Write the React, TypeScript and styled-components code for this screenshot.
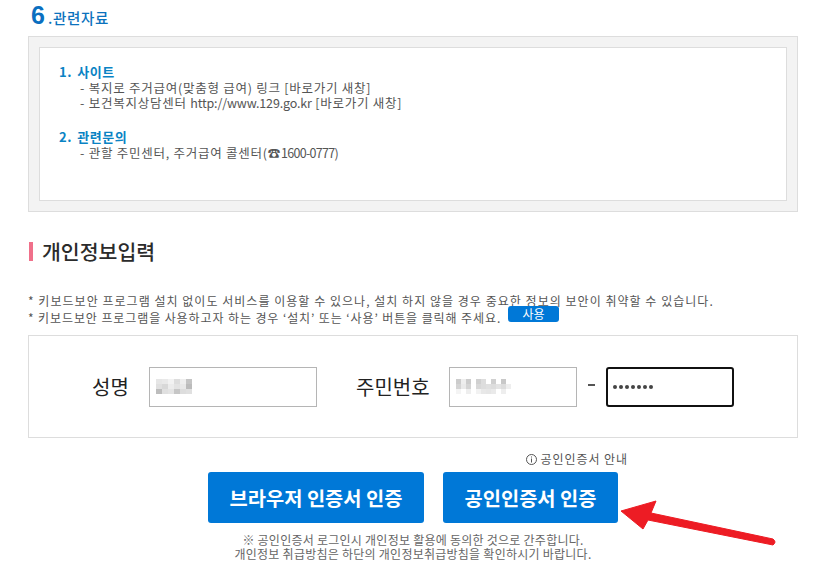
import React from "react";
import styled, { createGlobalStyle } from "styled-components";

const GlobalStyle = createGlobalStyle`
  html, body {
    margin: 0;
    padding: 0;
    background: #fff;
    font-family: "Noto Sans CJK KR", "Noto Sans", sans-serif;
    color: #555;
  }
`;

const Page = styled.div`
  position: relative;
  width: 770px;
  height: 582px;
  margin-left: 28px;
  overflow: hidden;
`;

const DocTitle = styled.h3`
  display: flex;
  align-items: baseline;
  height: 36px;
  margin: 0;
  padding: 3px 0 0 3px;
  box-sizing: border-box;
  font-size: 14.5px;
  line-height: 24px;
  font-weight: 500;
  letter-spacing: 0.7px;
  color: #0b72bd;
`;

const DocNumber = styled.span`
  font-family: "Liberation Sans", sans-serif;
  font-size: 25px;
  font-weight: 700;
  letter-spacing: 0;
  color: #0a6fc0;
  margin-right: 3px;
`;

const OuterBox = styled.div`
  height: 176px;
  box-sizing: border-box;
  padding: 10px;
  background: #f3f3f3;
  border: 1px solid #ddd;
`;

const InnerBox = styled.div`
  height: 100%;
  box-sizing: border-box;
  padding: 15px 19px;
  background: #fff;
  border: 1px solid #ddd;
  font-size: 12.5px;
  line-height: 15px;
  letter-spacing: 0.75px;
  color: #555;
`;

const ListTitle = styled.div<{ $gap?: number }>`
  margin-top: ${(p) => p.$gap ?? 0}px;
  font-size: 13px;
  font-weight: 700;
  line-height: 17px;
  letter-spacing: 0.5px;
  color: #0a83c4;
  word-spacing: 2px;
`;

const ListItem = styled.div`
  padding-left: 21px;
`;

const Latin = styled.span<{ $spacing: number }>`
  letter-spacing: ${(p) => p.$spacing}px;
`;

const SectionTitle = styled.h2`
  display: flex;
  align-items: center;
  gap: 9px;
  height: 24px;
  margin: 27px 0 0;
  font-size: 20.5px;
  line-height: 24px;
  font-weight: 500;
  color: #2b2b2b;
`;

const PinkBar = styled.i`
  display: block;
  width: 4px;
  height: 19px;
  margin: 1px 0 0 1px;
  background: #f0708a;
`;

const Notes = styled.div`
  margin-top: 29px;
  font-size: 12px;
  line-height: 17px;
  color: #555;
`;

const NoteLine = styled.div<{ $spacing: number }>`
  display: flex;
  align-items: flex-start;
  white-space: nowrap;
  letter-spacing: ${(p) => p.$spacing}px;
`;

const UseButton = styled.span`
  display: block;
  width: 51px;
  height: 16px;
  margin: -3px 0 0 7px;
  background: #0078d7;
  border-radius: 3px;
  color: #fff;
  font-size: 12px;
  line-height: 16px;
  letter-spacing: 0;
  text-align: center;
`;

const FormCard = styled.div`
  display: flex;
  align-items: center;
  height: 103px;
  box-sizing: border-box;
  margin-top: 9px;
  padding-left: 63px;
  border: 1px solid #ddd;
`;

const Label = styled.label<{ $width: number; $gap: number; $after: number }>`
  width: ${(p) => p.$width}px;
  margin-right: ${(p) => p.$after}px;
  margin-left: ${(p) => p.$gap}px;
  font-size: 20px;
  font-weight: 400;
  color: #222;
  white-space: nowrap;
`;

const FieldBox = styled.div<{ $width: number; $focus?: boolean }>`
  display: flex;
  align-items: center;
  width: ${(p) => p.$width}px;
  height: 40px;
  box-sizing: border-box;
  padding-left: ${(p) => (p.$focus ? 5 : 6)}px;
  background: #fff;
  border: ${(p) => (p.$focus ? "2px solid #111" : "1px solid #b5b5b5")};
  border-radius: ${(p) => (p.$focus ? "3px" : "0")};
`;

const Dash = styled.span`
  width: 7px;
  height: 2px;
  margin: 0 11px 4px;
  background: #555;
`;

const Dots = styled.span`
  display: flex;
  gap: 2px;
`;

const Dot = styled.i`
  width: 4px;
  height: 4px;
  border-radius: 50%;
  background: #444;
`;

const InfoRow = styled.div`
  display: flex;
  justify-content: flex-end;
  align-items: center;
  gap: 2px;
  height: 14px;
  margin-top: 14px;
  padding-right: 170px;
  font-size: 12px;
  line-height: 14px;
  letter-spacing: 0.95px;
  color: #555;
`;

const Buttons = styled.div`
  display: flex;
  justify-content: center;
  gap: 19px;
  margin-top: 6px;
`;

const AuthButton = styled.button<{ $width: number }>`
  width: ${(p) => p.$width}px;
  height: 51px;
  padding: 0;
  border: 0;
  border-radius: 3px;
  background: #0078d7;
  color: #fff;
  font-family: inherit;
  font-size: 19.8px;
  font-weight: 700;
`;

const Agreement = styled.p`
  margin: 10px 0 0;
  font-size: 12px;
  line-height: 14px;
  letter-spacing: 0.25px;
  color: #666;
  text-align: center;
`;

const Arrow = styled.svg`
  position: absolute;
  left: 590px;
  top: 500px;
`;

const Pixel = styled.svg`
  display: block;
`;

// 모자이크 처리된 입력값
const nameBlocks: [number, number, string][] = [
  [0, 0, "#e6e6e6"], [6, 0, "#e9e9e9"], [12, 0, "#f2f2f2"], [18, 0, "#ddd"], [24, 0, "#eee"], [30, 0, "#c4c4c4"],
  [0, 5, "#e0e0e0"], [6, 5, "#d8d8d8"], [12, 5, "#ececec"], [18, 5, "#e3e3e3"], [24, 5, "#e8e8e8"], [30, 5, "#bbb"],
  [0, 10, "#bdbdbd"], [6, 10, "#e0e0e0"], [12, 10, "#e4e4e4"], [18, 10, "#c6c6c6"], [24, 10, "#ddd"], [30, 10, "#e0e0e0"],
];

const idBlocks: [number, number, string][] = [
  [0, 0, "#ccc"], [5, 0, "#eee"], [10, 0, "#ccc"], [20, 0, "#d0d0d0"], [25, 0, "#ddd"], [35, 0, "#d0d0d0"], [45, 0, "#c8c8c8"],
  [0, 5, "#d4d4d4"], [5, 5, "#eaeaea"], [10, 5, "#d4d4d4"], [20, 5, "#d8d8d8"], [25, 5, "#ddd"], [30, 5, "#e0e0e0"], [35, 5, "#ddd"], [40, 5, "#e4e4e4"], [45, 5, "#ddd"], [50, 5, "#eee"],
  [0, 10, "#f4f4f4"], [10, 10, "#eee"], [20, 10, "#f2f2f2"], [25, 10, "#e8e8e8"], [30, 10, "#e6e6e6"], [35, 10, "#eaeaea"], [45, 10, "#eee"],
];

function Mosaic({ blocks, width, size }: { blocks: [number, number, string][]; width: number; size: number }) {
  return (
    <Pixel width={width} height={15} viewBox={`0 0 ${width} 15`}>
      {blocks.map(([x, y, c], i) => (
        <rect key={i} x={x} y={y} width={size} height={5} fill={c} />
      ))}
    </Pixel>
  );
}

export default function App() {
  return (
    <Page>
      <GlobalStyle />
      <DocTitle>
        <DocNumber>6</DocNumber>.관련자료
      </DocTitle>
      <OuterBox>
        <InnerBox>
          <ListTitle>1. 사이트</ListTitle>
          <ListItem>- 복지로 주거급여(맞춤형 급여) 링크 [바로가기 새창]</ListItem>
          <ListItem>
            - 보건복지상담센터 <Latin $spacing={-0.15}>http://www.129.go.kr</Latin> [바로가기 새창]
          </ListItem>
          <ListTitle $gap={18}>2. 관련문의</ListTitle>
          <ListItem>
            - 관할 주민센터, 주거급여 콜센터(☎<Latin $spacing={-0.7}>1600-0777</Latin>)
          </ListItem>
        </InnerBox>
      </OuterBox>

      <SectionTitle>
        <PinkBar />
        개인정보입력
      </SectionTitle>
      <Notes>
        <NoteLine $spacing={1.03}>* 키보드보안 프로그램 설치 없이도 서비스를 이용할 수 있으나, 설치 하지 않을 경우 중요한 정보의 보안이 취약할 수 있습니다.</NoteLine>
        <NoteLine $spacing={0.9}>
          * 키보드보안 프로그램을 사용하고자 하는 경우 ‘설치’ 또는 ‘사용’ 버튼을 클릭해 주세요.
          <UseButton>사용</UseButton>
        </NoteLine>
      </Notes>

      <FormCard>
        <Label $width={36} $gap={0} $after={21}>성명</Label>
        <FieldBox $width={168}>
          <Mosaic blocks={nameBlocks} width={36} size={6} />
        </FieldBox>
        <Label $width={74} $gap={39} $after={19}>주민번호</Label>
        <FieldBox $width={128}>
          <Mosaic blocks={idBlocks} width={56} size={5} />
        </FieldBox>
        <Dash />
        <FieldBox $width={128} $focus>
          <Dots>
            {Array.from({ length: 7 }, (_, i) => (
              <Dot key={i} />
            ))}
          </Dots>
        </FieldBox>
      </FormCard>

      <InfoRow>
        <svg width="13" height="13" viewBox="0 0 13 13">
          <circle cx="6.5" cy="6.5" r="5" fill="none" stroke="#555" />
          <path d="M6.5 3.5v1M6.5 5.5v4" stroke="#555" />
        </svg>
        공인인증서 안내
      </InfoRow>
      <Buttons>
        <AuthButton $width={216}>브라우저 인증서 인증</AuthButton>
        <AuthButton $width={175}>공인인증서 인증</AuthButton>
      </Buttons>
      <Agreement>
        ※ 공인인증서 로그인시 개인정보 활용에 동의한 것으로 간주합니다.
        <br />
        개인정보 취급방침은 하단의 개인정보취급방침을 확인하시기 바랍니다.
      </Agreement>

      <Arrow width="170" height="50" viewBox="0 0 170 50">
        <path d="M3 11 L38 1 L33 13 L155 39 Q159 42 155 45 L30 20 L25 29 Z" fill="#ed1c24" stroke="#ed1c24" strokeLinejoin="round" />
      </Arrow>
    </Page>
  );
}
